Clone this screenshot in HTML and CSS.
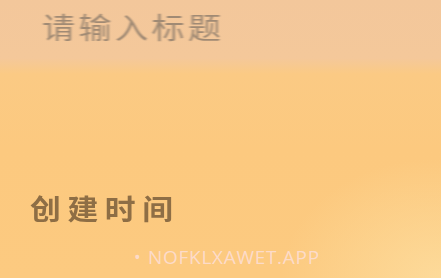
FILE: index.html
```html
<!DOCTYPE html>
<html lang="zh-CN">
<head>
<meta charset="utf-8">
<link rel="stylesheet" href="styles.css">
</head>
<body>
<div class="page">
  <div class="header">
    <div class="title">请输入标题</div>
  </div>
  <div class="content">
    <div class="label">创建时间</div>
    <div class="watermark"><span class="dot">•</span> NOFKLXAWET.APP</div>
  </div>
</div>
</body>
</html>
```
FILE: styles.css
```css
html, body {
  margin: 0;
  padding: 0;
  width: 441px;
  height: 278px;
  overflow: hidden;
}
.page {
  width: 441px;
  height: 278px;
  display: flex;
  flex-direction: column;
  font-family: "Noto Sans CJK SC", "Noto Sans", sans-serif;
  background: linear-gradient(180deg, #f3c79b 0px, #f4c89a 58px, #fbca84 74px, #fcc97f 150px, #fcca80 278px);
  position: relative;
  overflow: hidden;
}
.page::after {
  content: "";
  position: absolute;
  inset: 0;
  background: radial-gradient(ellipse 160px 120px at 441px 278px, rgba(253, 222, 160, 0.8), rgba(253, 222, 160, 0));
  pointer-events: none;
}
.header {
  height: 66px;
  padding-left: 42px;
  display: flex;
  align-items: flex-start;
}
.title {
  margin-top: 6px;
  font-size: 29px;
  line-height: 40px;
  letter-spacing: 3px;
  color: #a08a74;
  transform: scaleX(1.14);
  transform-origin: left center;
  filter: blur(0.7px);
}
.content {
  flex: 1;
  display: flex;
  flex-direction: column;
  align-items: flex-start;
  position: relative;
  z-index: 1;
}
.label {
  margin-top: 124px;
  margin-left: 30px;
  font-size: 28px;
  line-height: 36px;
  font-weight: 700;
  letter-spacing: 6px;
  color: #8e6e45;
  transform: scaleX(1.1);
  transform-origin: left center;
  filter: blur(0.7px);
}
.watermark {
  margin-top: 19px;
  margin-left: 134px;
  font-family: "Open Sans", "Noto Sans", sans-serif;
  font-size: 19px;
  line-height: 24px;
  letter-spacing: 0.7px;
  color: rgba(253, 222, 212, 0.9);
}
.dot {
  font-size: 18px;
  margin-right: 1px;
}
```
